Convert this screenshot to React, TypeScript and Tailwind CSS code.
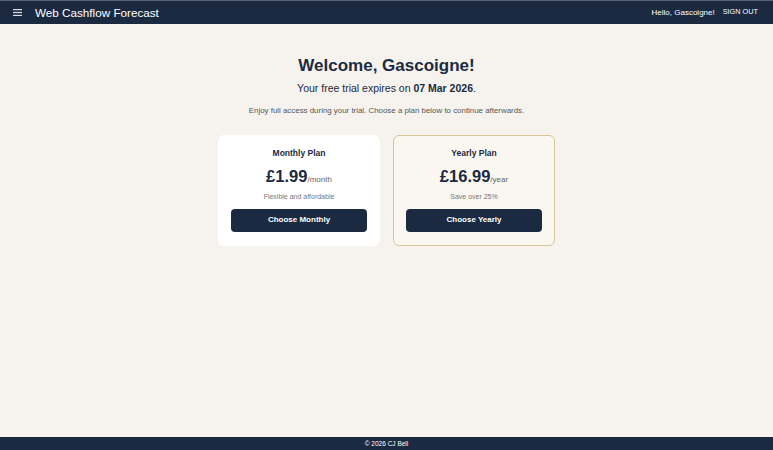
import React from 'react';

const plans = [
  {
    name: 'Monthly Plan',
    price: '£1.99',
    period: '/month',
    note: 'Flexible and affordable',
    cta: 'Choose Monthly',
    featured: false,
  },
  {
    name: 'Yearly Plan',
    price: '£16.99',
    period: '/year',
    note: 'Save over 25%',
    cta: 'Choose Yearly',
    featured: true,
  },
];

const App: React.FC = () => {
  return (
    <div
      className="min-h-screen flex flex-col bg-[#f6f3ee] text-[#1b2a41]"
      style={{ fontFamily: '"Liberation Sans", Arial, sans-serif' }}
    >
      <header className="h-[24px] flex items-center justify-between bg-[#1b2a41] border-t border-[#5a6474] pl-[13px] pr-[15px] text-white">
        <div className="flex items-center">
          <svg width="9" height="7" viewBox="0 0 9 7" className="mr-[13px]">
            <rect x="0" y="0" width="9" height="1.2" fill="#d8dce2" />
            <rect x="0" y="2.9" width="9" height="1.2" fill="#d8dce2" />
            <rect x="0" y="5.8" width="9" height="1.2" fill="#d8dce2" />
          </svg>
          <span className="text-[11.7px] leading-none">Web Cashflow Forecast</span>
        </div>
        <div className="flex items-center gap-[8px] text-[8px]">
          <span>Hello, Gascoigne!</span>
          <span className="uppercase text-[7.3px]">Sign out</span>
        </div>
      </header>

      <main className="flex-1 flex flex-col items-center pt-[33px]">
        <h1 className="text-[17px] font-bold leading-none">Welcome, Gascoigne!</h1>
        <p className="mt-[9px] text-[10.5px] leading-none">
          Your free trial expires on <span className="font-bold">07 Mar 2026</span>.
        </p>
        <p className="mt-[13px] text-[7.9px] leading-none text-[#555]">
          Enjoy full access during your trial. Choose a plan below to continue afterwards.
        </p>

        <div className="mt-[21px] flex gap-[13px]">
          {plans.map((plan) => (
            <div
              key={plan.name}
              className={`w-[162px] h-[111px] rounded-[6px] border flex flex-col items-center px-[12px] pt-[13px] ${
                plan.featured
                  ? 'bg-[#faf7f0] border-[#dcc49a]'
                  : 'bg-white border-white'
              }`}
            >
              <div className="text-[8.5px] font-bold leading-none">{plan.name}</div>
              <div className="mt-[10px] flex items-baseline">
                <span className="text-[16.5px] font-bold leading-none">{plan.price}</span>
                <span className="text-[8px] text-[#666]">{plan.period}</span>
              </div>
              <div className="mt-[7px] text-[7px] text-[#777] leading-none">{plan.note}</div>
              <button className="mt-[9px] w-full h-[23px] rounded-[4px] bg-[#1b2a41] text-white text-[8px] font-bold">
                {plan.cta}
              </button>
            </div>
          ))}
        </div>
      </main>

      <footer className="h-[13px] flex items-center justify-center bg-[#1b2a41] text-white text-[6.5px]">
        © 2026 CJ Bell
      </footer>
    </div>
  );
};

export default App;
